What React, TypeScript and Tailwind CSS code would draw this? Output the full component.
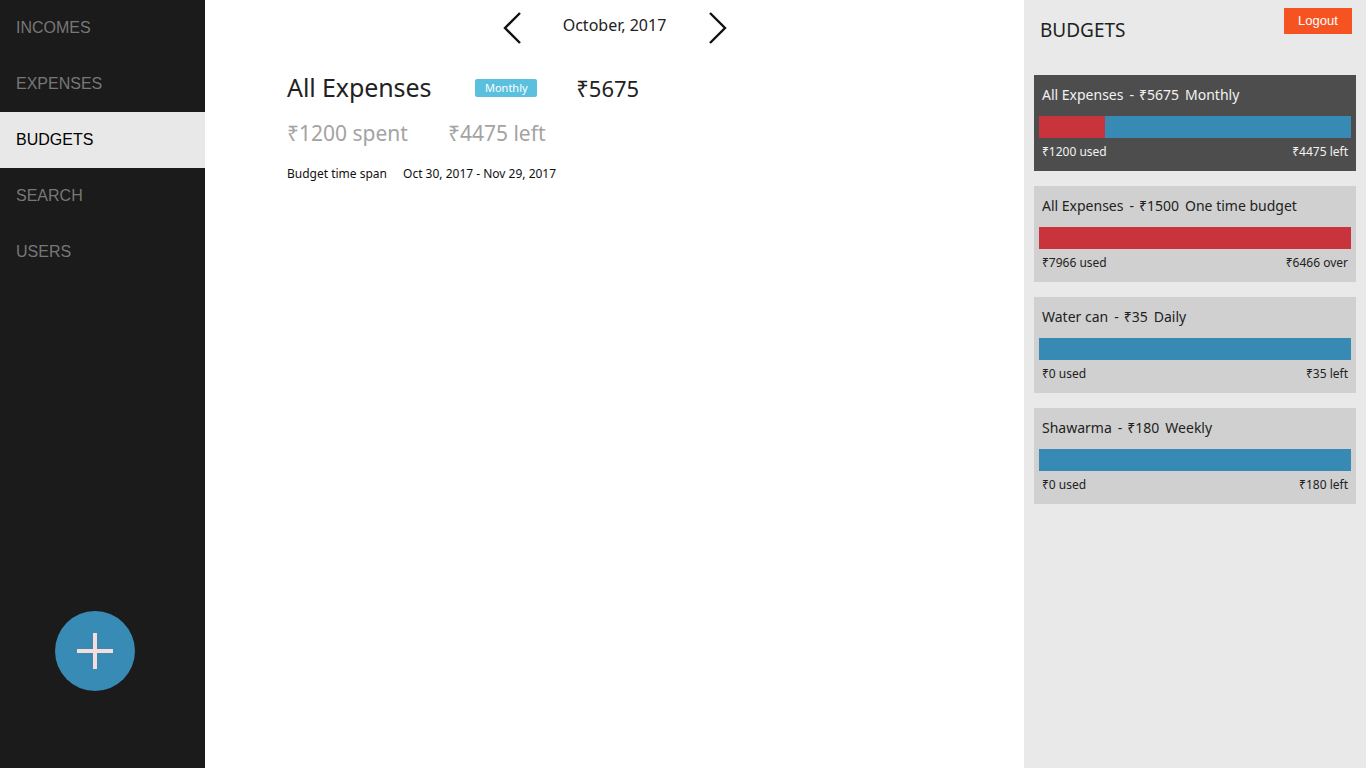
import React from "react";

type Budget = {
  name: string;
  amount: string;
  kind: string;
  usedPct: number;
  used: string;
  rest: string;
  active?: boolean;
};

const budgets: Budget[] = [
  { name: "All Expenses", amount: "₹5675", kind: "Monthly", usedPct: 21.1, used: "₹1200 used", rest: "₹4475 left", active: true },
  { name: "All Expenses", amount: "₹1500", kind: "One time budget", usedPct: 100, used: "₹7966 used", rest: "₹6466 over" },
  { name: "Water can", amount: "₹35", kind: "Daily", usedPct: 0, used: "₹0 used", rest: "₹35 left" },
  { name: "Shawarma", amount: "₹180", kind: "Weekly", usedPct: 0, used: "₹0 used", rest: "₹180 left" },
];

const nav = ["INCOMES", "EXPENSES", "BUDGETS", "SEARCH", "USERS"];

function Chevron({ dir }: { dir: "left" | "right" }) {
  return (
    <svg width="22" height="34" viewBox="0 0 22 34" fill="none">
      <path
        d={dir === "left" ? "M18 2 L3 17 L18 32" : "M4 2 L19 17 L4 32"}
        stroke="#111"
        strokeWidth="2.4"
      />
    </svg>
  );
}

export default function App() {
  const sans = { fontFamily: '"Noto Sans", "DejaVu Sans", sans-serif' };
  return (
    <div className="flex w-full h-[768px] overflow-hidden" style={sans}>
      {/* Left nav */}
      <aside className="w-[205px] shrink-0 bg-[#1b1b1b] flex flex-col relative">
        {nav.map((item) => (
          <div
            key={item}
            className={
              item === "BUDGETS"
                ? "h-14 flex items-center pl-4 bg-[#e8e8e8] text-black text-base"
                : "h-14 flex items-center pl-4 text-[#777777] text-base"
            }
            style={{ fontFamily: '"Liberation Sans", Arial, sans-serif' }}
          >
            {item}
          </div>
        ))}
        <button
          type="button"
          className="absolute left-[55px] top-[611px] w-20 h-20 rounded-full bg-[#378bb5] flex items-center justify-center"
        >
          <span className="relative block w-[36px] h-[36px]">
            <span className="absolute left-0 top-[16px] w-[36px] h-[4px] bg-[#f7dcdc]" />
            <span className="absolute left-[16px] top-0 w-[4px] h-[36px] bg-[#f7dcdc]" />
          </span>
        </button>
      </aside>

      {/* Main */}
      <main className="flex-1 bg-white">
        <div className="flex items-center justify-center gap-[11px] pt-[11px]">
          <Chevron dir="left" />
          <span className="text-[16px] text-[#222] w-[160px] text-center -mt-[6px]">October, 2017</span>
          <Chevron dir="right" />
        </div>
        <div className="pl-[82px] pt-[25px]">
          <div className="flex items-center h-[36px]">
            <span className="text-[25px] text-[#222] tracking-[-0.1px]">All Expenses</span>
            <span className="ml-[44px] bg-[#5bc0de] text-white text-[11px] rounded-[2px] w-[62px] h-[18px] flex items-center justify-center">
              Monthly
            </span>
            <span className="ml-[39px] text-[22px] text-[#222]">₹5675</span>
          </div>
          <div className="flex items-center h-[36px] mt-[10px] text-[21px] text-[#a3a3a3]">
            <span>₹1200 spent</span>
            <span className="ml-[40px]">₹4475 left</span>
          </div>
          <div className="flex items-center mt-[13px] text-[12px] text-[#111]">
            <span>Budget time span</span>
            <span className="ml-[16px]">Oct 30, 2017 - Nov 29, 2017</span>
          </div>
        </div>
      </main>

      {/* Right panel */}
      <aside className="w-[342px] shrink-0 bg-[#e9e9e9] px-[10px]">
        <div className="relative h-[75px]">
          <h2 className="absolute left-[6px] top-[16px] text-[19px] text-[#222]">BUDGETS</h2>
          <button
            type="button"
            className="absolute right-[4px] top-[8px] w-[68px] h-[26px] bg-[#f55322] text-white text-[13px]"
            style={{ fontFamily: '"Liberation Sans", Arial, sans-serif' }}
          >
            Logout
          </button>
        </div>
        <div className="flex flex-col gap-[15px]">
          {budgets.map((b, i) => (
            <div
              key={i}
              className={
                b.active
                  ? "bg-[#4d4d4d] text-[#f2f2f2] px-[5px] pt-[10px] pb-[11px]"
                  : "bg-[#d0d0d0] text-[#222] px-[5px] pt-[10px] pb-[11px]"
              }
            >
              <div className="px-[3px] text-[14px] h-[20px] leading-[20px] whitespace-nowrap">
                {b.name}
                <span className="ml-[6px]">-</span>
                <span className="ml-[5px]">{b.amount}</span>
                <span className="ml-[6px]">{b.kind}</span>
              </div>
              <div className="mt-[11px] h-[22px] bg-[#368ab3] flex">
                <div className="h-full bg-[#c9343c]" style={{ width: `${b.usedPct}%` }} />
              </div>
              <div className="flex justify-between px-[3px] mt-[6px] text-[12px] leading-[16px]">
                <span>{b.used}</span>
                <span>{b.rest}</span>
              </div>
            </div>
          ))}
        </div>
      </aside>
    </div>
  );
}
